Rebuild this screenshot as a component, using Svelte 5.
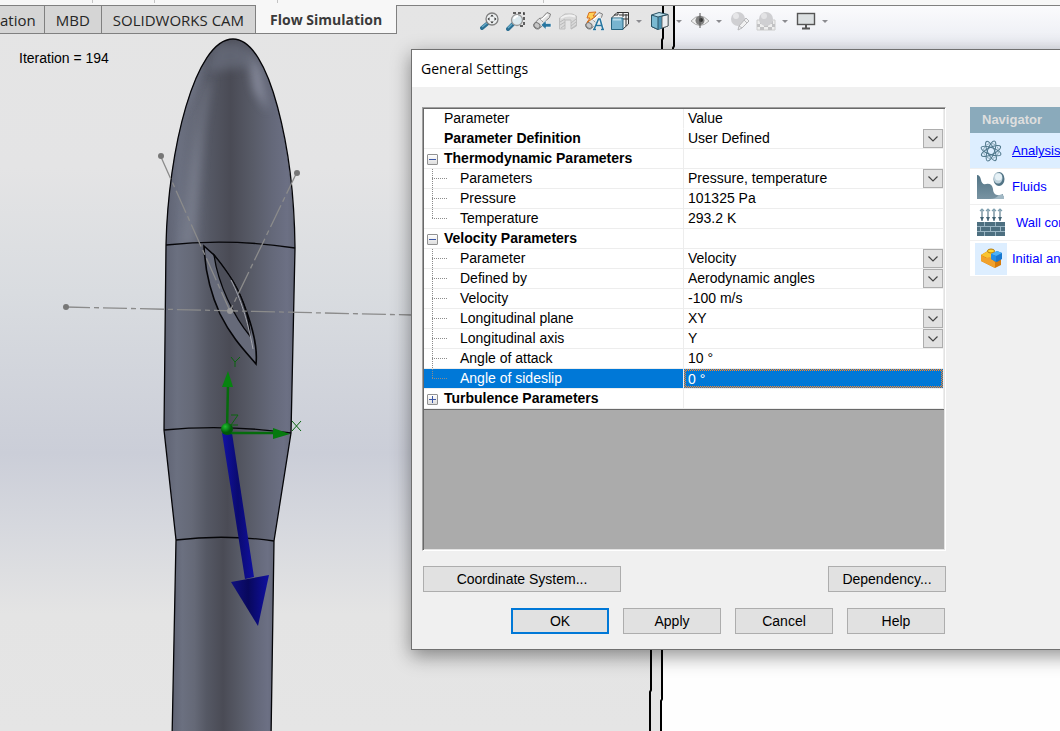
<script>
  const tabs = ['ation', 'MBD', 'SOLIDWORKS CAM', 'Flow Simulation'];

  const rows = [
    { kind: 'top', name: 'Parameter Definition', value: 'User Defined', pick: true },
    { kind: 'group', name: 'Thermodynamic Parameters', open: true },
    { kind: 'leaf', name: 'Parameters', value: 'Pressure, temperature', pick: true },
    { kind: 'leaf', name: 'Pressure', value: '101325 Pa' },
    { kind: 'leaf', name: 'Temperature', value: '293.2 K', last: true },
    { kind: 'group', name: 'Velocity Parameters', open: true },
    { kind: 'leaf', name: 'Parameter', value: 'Velocity', pick: true },
    { kind: 'leaf', name: 'Defined by', value: 'Aerodynamic angles', pick: true },
    { kind: 'leaf', name: 'Velocity', value: '-100 m/s' },
    { kind: 'leaf', name: 'Longitudinal plane', value: 'XY', pick: true },
    { kind: 'leaf', name: 'Longitudinal axis', value: 'Y', pick: true },
    { kind: 'leaf', name: 'Angle of attack', value: '10 °' },
    { kind: 'leaf', name: 'Angle of sideslip', value: '0 °', last: true, selected: true },
    { kind: 'group', name: 'Turbulence Parameters', open: false }
  ];

  const tools = [
    { id: 'fit', label: 'Zoom to Fit' },
    { id: 'area', label: 'Zoom to Area' },
    { id: 'prev', label: 'Previous View' },
    { id: 'section', label: 'Section View' },
    { id: 'annot', label: 'Dynamic Annotation Views' },
    { id: 'orient', label: 'View Orientation', menu: true },
    { id: 'style', label: 'Display Style', menu: true },
    { id: 'eye', label: 'Hide/Show Items', menu: true },
    { id: 'look', label: 'Edit Appearance' },
    { id: 'world', label: 'Apply Scene', menu: true },
    { id: 'screen', label: 'View Settings', menu: true }
  ];

  const pages = [
    { id: 'analysis', label: 'Analysis type', current: true },
    { id: 'fluids', label: 'Fluids' },
    { id: 'wall', label: 'Wall conditions' },
    { id: 'initial', label: 'Initial and ambient conditions' }
  ];
  const petals = [0, 45, 90, 135];
</script>

<main class="app">
  <svg class="scene" aria-hidden="true">
    <defs>
      <linearGradient id="sky" x1="0" y1="0" x2="0" y2="1">
        <stop offset="0" stop-color="#e5e5e5" /><stop offset=".23" stop-color="#e4e4e5" />
        <stop offset=".4" stop-color="#d9dce0" /><stop offset=".62" stop-color="#cbced8" />
        <stop offset=".72" stop-color="#d6d8de" /><stop offset=".84" stop-color="#e4e4e4" /><stop offset="1" stop-color="#e5e5e5" />
      </linearGradient>
      <linearGradient id="paper" gradientUnits="userSpaceOnUse" x1="0" y1="5" x2="0" y2="650">
        <stop offset="0" stop-color="#fbfbfd" /><stop offset=".07" stop-color="#e9ebf2" /><stop offset=".5" stop-color="#eeeef4" /><stop offset="1" stop-color="#fefefe" />
      </linearGradient>
      <linearGradient id="hull">
        <stop offset="0" stop-color="#5f6373" /><stop offset=".1" stop-color="#6b7080" /><stop offset=".22" stop-color="#656977" />
        <stop offset=".34" stop-color="#555864" /><stop offset=".5" stop-color="#4a4b55" /><stop offset=".66" stop-color="#575a66" />
        <stop offset=".82" stop-color="#646879" /><stop offset=".94" stop-color="#6c7084" /><stop offset="1" stop-color="#646879" />
      </linearGradient>
      <linearGradient id="shaft"><stop offset="0" stop-color="#1212a4" /><stop offset=".5" stop-color="#0a0a70" /><stop offset="1" stop-color="#1010a0" /></linearGradient>
      <linearGradient id="cone"><stop offset="0" stop-color="#101080" /><stop offset=".45" stop-color="#08085c" /><stop offset="1" stop-color="#1010a0" /></linearGradient>
      <radialGradient id="ball" cx=".35" cy=".3"><stop offset="0" stop-color="#20c030" /><stop offset="1" stop-color="#005a08" /></radialGradient>
      <filter id="soft" x="-1" y="-.3" width="3" height="1.6"><feGaussianBlur stdDeviation="5" /></filter>
      <clipPath id="nose"><path d="M166 245C168 150 195 39 233 39C270 39 294 150 295 248Q230 238 166 245Z" /></clipPath>
    </defs>
    <rect width="100%" height="100%" fill="url(#sky)" />
    <path d="M674 5H2400V2000H660V700L662 690V300Z" fill="url(#paper)" />
    <path d="M663 5V38L662 40V60M674 5V46L673 48V60M651 640V690L650 692V900M662 640V699L661 701V900" fill="none" stroke="#000" stroke-width="2" />

    <path d="M176 540L172 740H271L274 541Q225 534 176 540Z" fill="url(#hull)" />
    <path d="M164 430L176 540Q225 534 274 541L291 433Q225 424 164 430Z" fill="url(#hull)" />
    <path d="M166 245L164 430Q225 424 291 433L295 248Q230 238 166 245Z" fill="url(#hull)" />
    <path d="M166 245C168 150 195 39 233 39C270 39 294 150 295 248Q230 238 166 245Z" fill="url(#hull)" />
    <g clip-path="url(#nose)">
      <path d="M181 245L190 170L205 90L212 75L203 130L194 245Z" fill="#858a9a" opacity=".55" filter="url(#soft)" />
      <path d="M247 50L260 68L268 112L254 90Z" fill="#a0a4b8" opacity=".65" filter="url(#soft)" />
      <path d="M215 46Q233 36 248 50L254 66L206 72Z" fill="#6b6f7f" opacity=".7" filter="url(#soft)" />
      <path d="M196 85L205 55L190 80L180 120Z" fill="#787e90" opacity=".8" filter="url(#soft)" />
    </g>
    <g fill="none" stroke="#050508" stroke-width="1.3">
      <path d="M166 245C168 150 195 39 233 39C270 39 294 150 295 248L291 433L274 541L271 740M166 245L164 430L176 540L172 740" />
      <path d="M166 245Q230 238 295 248M164 430Q225 424 291 433M176 540Q225 534 274 541" />
    </g>
    <path d="M204 246C205 270 210 292 220 314C232 338 244 350 256 364C259 336 240 290 228 274Q219 262 214 255Z" fill="#666a79" stroke="#050508" stroke-width="1.6" />
    <path d="M214 255C218 284 234 317 250 336C250 318 241 292 229 275Q221 263 214 255Z" fill="#4c4e59" stroke="#050508" stroke-width="1.3" />
    <path d="M231 280C241 300 247 318 253 349" fill="none" stroke="#a5a7af" stroke-width="1" />
    <g stroke="#8b8b8b" stroke-width="1.3" stroke-dasharray="24 4 5 4">
      <path d="M161 157L230 311" /><path d="M297 172L230 311" /><path d="M66 307L412 315" />
    </g>
    <g fill="#777"><circle cx="161" cy="156" r="3" /><circle cx="297" cy="173" r="3" /><circle cx="66" cy="307" r="3" /><circle cx="230" cy="311" r="3" fill="#999" /></g>

    <path d="M222 433H232L254 577L245 579Z" fill="url(#shaft)" />
    <path d="M231 582L269 575L258 626Z" fill="url(#cone)" />
    <g stroke="#056b0c" stroke-width="2.5"><path d="M227 430L228 385M228 433H275" /></g>
    <path d="M228 371L222 387H233Z" fill="#078310" /><path d="M290 434L273 428V439Z" fill="#067a0e" />
    <circle cx="227" cy="429" r="6" fill="url(#ball)" />
    <g fill="none" stroke="#0a650f" stroke-width="1"><path d="M231 357L235 362L240 357M235 362V367M231 415H238L231 425H238M292 421L301 431M301 421L292 431" /></g>
  </svg>

  <header>
    <div class="strip"><i></i><i></i><i></i><i></i></div>
    <div class="bar">
      <nav class="tabs" aria-label="Command tabs">
        {#each tabs as tab, i}
          <button class="tab" class:first={i === 0} class:active={i === 3}>{tab}</button>
        {/each}
      </nav>
      <div class="tools">
        {#each tools as t}
          <div class="tool">
            <button class="icon" aria-label={t.label}>
              <svg width="20" height="20" viewBox="0 0 20 20" aria-hidden="true">
                {#if t.id === 'fit'}
                  <path d="M2 17L8 12" stroke="#2b6f93" stroke-width="4" stroke-linecap="round" /><path d="M2 16L7 12" stroke="#67abc8" stroke-width="1.5" />
                  <circle cx="12" cy="8" r="6" fill="#edf0f1" stroke="#808080" stroke-width="1.3" />
                  <path d="M12 3.500l1.700 2h-3.400zM12 12.500l1.700-2h-3.400zM7.500 8l2-1.700v3.400zM16.500 8l-2-1.700v3.400z" fill="#333" />
                {:else if t.id === 'area'}
                  <path d="M7 2H18V15H14" fill="none" stroke="#333" stroke-width="1.5" stroke-dasharray="3 2" />
                  <path d="M2 18L7 13" stroke="#2b6f93" stroke-width="4" stroke-linecap="round" /><path d="M2 17L6 13" stroke="#67abc8" stroke-width="1.5" />
                  <circle cx="11" cy="9" r="5.500" fill="#dce9ee" stroke="#999" stroke-width="1.3" /><path d="M8 8Q9 5 12 5" stroke="#fff" stroke-width="2" fill="none" />
                {:else if t.id === 'prev' || t.id === 'annot'}
                  <path d="M1.500 13.500L7 7.500L10 7L15 1.500L18.500 3L17.500 6.500L12.500 11L11.500 14L6.500 18Q2 18.500 1.500 13.500Z" fill="#e2e2e2" stroke="#808080" />
                  <ellipse cx="5" cy="14.500" rx="3.200" ry="2.600" fill="#c6c6c6" stroke="#777" transform="rotate(35 5 14.500)" /><path d="M8 8L12 12" stroke="#999" /><path d="M9 9L15.500 3.500" stroke="#fff" stroke-width="1.500" />
                  {#if t.id === 'prev'}
                    <path d="M9 14L14 9.500V12.500H19V16H14V18.500Z" fill="#2876a0" stroke="#f5f5f5" stroke-width=".6" />
                  {:else}
                    <path d="M5 1.500L12 1L9 5H12L3 11.500L6 7H3Z" fill="#ffd057" stroke="#d66d1c" />
                    <path d="M10 18.500L14.500 8H16L19 18.500M12 14.500H18M9 18.500H12M17 18.500H20" fill="none" stroke="#f5f5f5" stroke-width="3" />
                    <path d="M10 18.500L14.500 8H16L19 18.500M12 14.500H18M9 18.500H12M17 18.500H20" fill="none" stroke="#2876a0" stroke-width="1.6" />
                  {/if}
                {:else if t.id === 'section'}
                  <path d="M1.500 7L7 3H14L18.500 5V15L13 18V9H7V18H1.500Z" fill="#dadada" stroke="#bdbdbd" />
                  <path d="M2 11L7 8M2 14L7 11M3 17L7 14M13 12L18 8M13 15L18 11M13 18L18 14" stroke="#bababa" /><path d="M3 7Q9 3 17 5.500" stroke="#f1f1f1" fill="none" stroke-width="2" />
                {:else if t.id === 'orient'}
                  <path d="M7 1.500H18.500V13L13 18H1.500V7Z" fill="#f2f2f2" stroke="#333" /><path d="M13 1V6M9 4H18M16 3V15M13 8H18M4 4H8V1" stroke="#333" fill="none" />
                  <path d="M1.500 7H13V18.500H1.500Z" fill="#78b4cf" stroke="#276480" /><path d="M3 8.500H11" stroke="#b9dcea" stroke-width="2" />
                {:else if t.id === 'style'}
                  <path d="M1.500 4L9 1.500L18 3.500V15L8 18.500L1.500 15.500Z" fill="#b7dbe8" stroke="#2a5365" />
                  <path d="M8 6L12 5V17L8 18.500Z" fill="#4c94b4" /><path d="M12 5L18 3.500V15L12 17Z" fill="#e9edf0" stroke="#555" stroke-width=".8" /><path d="M1.500 4L8 6V18.500L1.500 15.500Z" fill="#79b9d1" stroke="#2a5365" /><path d="M8 6L18 3.500" stroke="#2a5365" />
                {:else if t.id === 'eye'}
                  <path d="M1 10Q10 0 19 10Q10 19 1 10Z" fill="#eee" stroke="#aaa" /><circle cx="10" cy="9.500" r="4.500" fill="#808080" /><circle cx="11" cy="9" r="2" fill="#333" /><path d="M10 2V17" stroke="#555" />
                {:else if t.id === 'look'}
                  <circle cx="8" cy="8" r="7" fill="#cfcfd2" /><circle cx="6" cy="5" r="3" fill="#e6e6e8" />
                  <path d="M8 19L9 15L16 7L19 10L12 17Z" fill="#f1f1f2" stroke="#b8b8bb" /><path d="M9 15L12 17M14 9L17 12" stroke="#b8b8bb" />
                {:else if t.id === 'world'}
                  <path d="M1 9H19V19H1Z" fill="#eee" stroke="#ccc" /><path d="M1 13h3v3H1zM4 16h4v3H4zM8 14h4v2H8zM12 16h4v3h-4zM16 13h3v3h-3zM4 10h3v3H4zM14 10h3v3h-3z" fill="#c2c2c4" />
                  <circle cx="10" cy="8" r="7" fill="#cfcfd2" /><circle cx="8" cy="5" r="3" fill="#e3e3e5" />
                {:else}
                  <rect x="1.500" y="2.500" width="17" height="11" fill="#dce0e2" stroke="#555" stroke-width="1.4" /><path d="M10 14V17M6 17.500H14" stroke="#555" stroke-width="2" />
                {/if}
              </svg>
            </button>
            {#if t.menu}<button class="more" aria-label="{t.label} menu"></button>{/if}
          </div>
        {/each}
      </div>
    </div>
  </header>
  <p class="iteration">Iteration = 194</p>

  <section class="dialog" role="dialog" aria-labelledby="title">
    <h1 id="title">General Settings</h1>
    <div class="body">
      <div class="left">
        <div class="frame">
          <table>
            <thead><tr><th scope="col">Parameter</th><th scope="col">Value</th></tr></thead>
            <tbody>
              {#each rows as r, i}
                <tr class:selected={r.selected}>
                  <td>
                    <div class="name">
                      {#if r.kind === 'group'}
                        <span class="stem"><button class="toggle" class:closed={!r.open} aria-expanded={r.open} aria-label={r.name}></button></span><b>{r.name}</b>
                      {:else if r.kind === 'top'}
                        <span class="stem"></span><label for="v{i}"><b>{r.name}</b></label>
                      {:else}
                        <span class="stem branch" class:last={r.last}></span><label for="v{i}">{r.name}</label>
                      {/if}
                    </div>
                  </td>
                  <td>
                    {#if r.pick}
                      <div class="pick">
                        <select id="v{i}"><option>{r.value}</option></select>
                        <span class="drop"><svg width="12" height="8" viewBox="0 0 12 8" aria-hidden="true"><path d="M1.500 1.500L6 6L10.500 1.500" fill="none" stroke="#444" stroke-width="1.2" /></svg></span>
                      </div>
                    {:else if r.value}
                      <input id="v{i}" type="text" value={r.value} />
                    {/if}
                  </td>
                </tr>
              {/each}
            </tbody>
          </table>
        </div>
        <div class="row between"><button class="btn wide">Coordinate System...</button><button class="btn mid">Dependency...</button></div>
        <div class="row end"><button class="btn ok">OK</button><button class="btn">Apply</button><button class="btn">Cancel</button><button class="btn">Help</button></div>
      </div>

      <nav class="navigator" aria-label="Navigator">
        <h2>Navigator</h2>
        {#each pages as p}
          <a href="#{p.id}" class:current={p.current} class:inset={p.id === 'wall'}>
            <svg class:tile={p.id === 'initial'} width="32" height="32" viewBox="0 0 32 32" aria-hidden="true">
              {#if p.id === 'analysis'}
                <g fill="none" stroke="#50788c" stroke-width="1">
                  {#each petals as a}<ellipse cx="16" cy="16" rx="10.500" ry="3.500" transform="rotate({a + 20} 16 16)" />{/each}
                  <circle cx="16" cy="16" r="7.500" stroke="#8eabb9" stroke-dasharray="4 2" />
                </g>
              {:else if p.id === 'fluids'}
                <defs><linearGradient id="sea" x1="0" y1="0" x2="0" y2="1"><stop offset="0" stop-color="#527485" /><stop offset="1" stop-color="#7893a2" /></linearGradient></defs>
                <path d="M2 4Q5 4 6 9Q7 14 11 13Q17 12 18 18C18 23 22 26 28 23V28H2Z" fill="url(#sea)" />
                <path d="M15 28Q20 28 23 25Q26 22 29 25V28Z" fill="#a1b8c4" />
                <ellipse cx="24" cy="8" rx="5.500" ry="7" fill="#527485" /><ellipse cx="23" cy="7" rx="4.500" ry="5.500" fill="#bfd2dc" /><ellipse cx="23.500" cy="6" rx="3.500" ry="3.500" fill="#e6f1f6" />
              {:else if p.id === 'wall'}
                <g fill="none" stroke="#607f8f" stroke-width="1.200"><path d="M7 2V14M13 2V14M19 2V14M25 2V14" /><path d="M5 4l2-2 2 2M11 4l2-2 2 2M17 4l2-2 2 2M23 4l2-2 2 2" stroke="#7fa0b0" /></g>
                <path d="M5 10h4l-2 4zM11 10h4l-2 4zM17 10h4l-2 4zM23 10h4l-2 4z" fill="#426273" />
                <path d="M2 15H30V29H2Z" fill="#9ab5c3" />
                <path d="M2 15h7v4H2zM10 15h10v4H10zM21 15h9v4h-9zM2 20h3v4H2zM6 20h9v4H6zM16 20h9v4h-9zM26 20h4v4h-4zM2 25h7v4H2zM10 25h10v4H10zM21 25h9v4h-9z" fill="#4d6f80" />
              {:else}
                <path d="M6 12L16 6L26 14V22L20 25L6 18Z" fill="#d47a0c" /><path d="M6 12L11 9L15 7L20 10V15L16 17Z" fill="#f9c431" />
                <path d="M6 12L11 15L15 14L20 19V25L6 18Z" fill="#f1a12b" /><ellipse cx="16" cy="8" rx="3.500" ry="2" fill="#ffd72e" stroke="#b57b12" />
                <path d="M16 11L22 8L27 10V16L22 19L16 16Z" fill="#1878cf" /><path d="M16 11L22 8L27 10L21 13Z" fill="#4bb2f7" /><path d="M16 11L21 13V19L16 16Z" fill="#218ee8" />
              {/if}
            </svg>
            <span>{p.label}</span>
          </a>
        {/each}
      </nav>
    </div>
  </section>
</main>

<style>
  :global(body) { margin: 0; }
  .app { position: relative; min-height: 100vh; overflow: hidden; font-family: "Liberation Sans", Arial, sans-serif; font-size: 14px; color: #000; }
  .app * { box-sizing: border-box; }
  button, input, select { font: inherit; color: inherit; margin: 0; padding: 0; border: 0; border-radius: 0; background: none; }
  .scene { position: absolute; inset: 0; width: 100%; height: 100%; }
  header { position: relative; }
  .strip { display: flex; height: 5px; background: #f7f7f7; }
  .strip i { width: 1px; height: 3px; background: #c4c4c4; margin-left: 92px; }
  .strip i:nth-child(2) { margin-left: 61px; }
  .strip i:nth-child(3) { margin-left: 122px; }
  .strip i:nth-child(4) { margin-left: 265px; }
  .bar { display: flex; border-top: 1px solid #808080; }
  .tabs { display: flex; flex: none; }
  .tab { height: 28px; padding: 0 11px; background: #d5d5d5; border-right: 1px solid #808080; border-bottom: 1px solid #808080; font-family: "Open Sans", "Noto Sans", sans-serif; font-size: 15px; color: #262626; white-space: nowrap; }
  .tab.first { padding: 0 8px 0 0; }
  .tab.active { margin-top: -1px; height: 29px; padding: 0 14px; background: #f7f7f7; font-size: 14px; font-weight: 700; color: #3a3a3a; }
  .tools { display: flex; gap: 6px; margin-left: 83px; padding-top: 5px; }
  .tool { display: flex; height: 20px; }
  .icon { width: 20px; height: 20px; }
  .icon svg { display: block; }
  .more { width: 14px; padding: 0 2px 0 6px; }
  .more::before { content: ""; display: block; border: 3px solid transparent; border-top-color: #8b8b90; margin-top: 3px; }
  .iteration { position: relative; margin: 16px 19px; line-height: 16px; }

  .dialog { position: absolute; left: 411px; right: -111px; top: 49px; border: 1px solid #707070; background: #f0f0f0; box-shadow: 0 6px 18px rgba(0, 0, 0, .42); }
  h1 { margin: 0; height: 37px; padding-left: 9px; background: #fff; font: 400 14px/37px "Open Sans", "Noto Sans", sans-serif; }
  .body { display: flex; gap: 24px; padding: 20px 20px 15px 10px; align-items: flex-start; }
  .left { flex: 1; display: flex; flex-direction: column; }
  .frame { min-height: 444px; margin-bottom: 15px; border: 1px solid; border-color: #a0a0a0 #fff #fff #a0a0a0; background: #ababab; box-shadow: inset 1px 1px #696969, inset -1px -1px #e3e3e3; padding: 1px; }
  table { width: 100%; border-collapse: separate; border-spacing: 0; table-layout: fixed; background: #fff; border-bottom: 1px solid #696969; }
  th, td { height: 20px; padding: 0; border-right: 1px solid #ededed; border-bottom: 1px solid #ededed; line-height: 19px; text-align: left; font-weight: 400; }
  th { border-bottom-color: #fff; padding-left: 4px; }
  th:first-child { width: 260px; padding-left: 20px; }
  .name { display: flex; height: 19px; align-items: stretch; white-space: nowrap; }
  .stem { flex: none; width: 20px; position: relative; }
  .branch { width: 36px; }
  .branch::before { content: ""; position: absolute; left: 8px; top: 0; width: 1px; height: 20px; background: repeating-linear-gradient(#8c8c8c 0 1px, transparent 1px 2px); }
  .branch.last::before { height: 10px; }
  .branch::after { content: ""; position: absolute; left: 8px; top: 9px; width: 16px; height: 1px; background: repeating-linear-gradient(90deg, #8c8c8c 0 1px, transparent 1px 2px); }
  .toggle { display: grid; place-items: center; width: 11px; height: 11px; margin: 5px 0 0 3px; border: 1px solid #919191; border-radius: 1px; background: linear-gradient(#fff, #dedede); }
  .toggle::before { content: ""; width: 7px; height: 1px; background: #3c57a5; grid-area: 1 / 1; }
  .toggle.closed::after { content: ""; width: 1px; height: 7px; background: #3c57a5; grid-area: 1 / 1; }
  .pick { display: flex; position: relative; height: 19px; }
  select { appearance: none; width: 100%; height: 19px; padding-left: 4px; line-height: 19px; }
  .drop { position: absolute; right: 0; top: 0; width: 20px; height: 19px; display: grid; place-items: center; background: #e1e1e1; border: 1px solid #adadad; pointer-events: none; }
  input { display: block; width: 100%; height: 19px; padding-left: 4px; line-height: 19px; }
  .selected td { color: #fff; background: #0078d7; background-clip: padding-box; }
  .selected input { border: 2px solid transparent; padding-left: 2px; line-height: 15px; background: linear-gradient(#0078d7, #0078d7) padding-box, repeating-conic-gradient(#ff8728 0 25%, #0078d7 0 50%) 0 0 / 2px 2px border-box; }
  .row { display: flex; gap: 14px; padding: 0 1px; }
  .row + .row { margin-top: 16px; }
  .between { justify-content: space-between; padding-right: 0; }
  .end { justify-content: flex-end; }
  .btn { width: 98px; height: 26px; background: #e1e1e1; border: 1px solid #adadad; }
  .btn.wide { width: 198px; }
  .btn.mid { width: 118px; }
  .btn.ok { border: 2px solid #0078d7; }
  .navigator { flex: none; width: 180px; background: #fff; font-size: 13px; }
  h2 { margin: 0; height: 26px; padding-left: 12px; background: #8aaabb; color: #dedede; font-size: 13px; line-height: 26px; }
  .navigator a { display: flex; align-items: center; gap: 5px; height: 36px; padding-left: 5px; border-bottom: 1px solid #efefef; color: #00f; text-decoration: none; white-space: nowrap; }
  .navigator a.inset { gap: 9px; }
  .navigator a.current { background: #def; text-decoration: underline; }
  .navigator svg { flex: none; }
  .tile { background: #def; }
</style>
